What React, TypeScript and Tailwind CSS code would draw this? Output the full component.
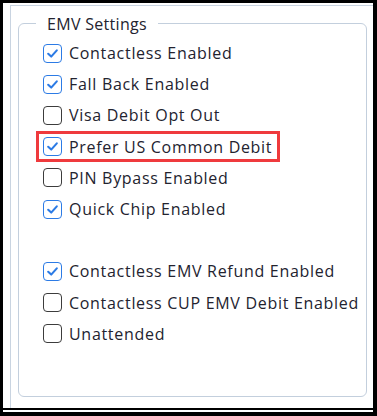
import React from 'react';

type Item = { label: string; checked: boolean; highlight?: boolean } | null;

const items: Item[] = [
  { label: 'Contactless Enabled', checked: true },
  { label: 'Fall Back Enabled', checked: true },
  { label: 'Visa Debit Opt Out', checked: false },
  { label: 'Prefer US Common Debit', checked: true, highlight: true },
  { label: 'PIN Bypass Enabled', checked: false },
  { label: 'Quick Chip Enabled', checked: true },
  null,
  { label: 'Contactless EMV Refund Enabled', checked: true },
  { label: 'Contactless CUP EMV Debit Enabled', checked: false },
  { label: 'Unattended', checked: false },
];

const font = { fontFamily: '"Open Sans", "Noto Sans", sans-serif' };

function CheckBox({ checked }: { checked: boolean }) {
  return (
    <span
      className={
        checked
          ? 'flex h-[19px] w-[19px] shrink-0 items-center justify-center rounded-[4px] border-[1.6px] border-[#2c7be5] bg-white'
          : 'flex h-[19px] w-[19px] shrink-0 items-center justify-center rounded-[4px] border-[1.6px] border-[#3c3c3c] bg-white'
      }
    >
      {checked && (
        <svg width="13" height="13" viewBox="0 0 13 13" fill="none">
          <path d="M2.2 6.8 L5.2 9.6 L10.8 3.4" stroke="#2c7be5" strokeWidth="2.1" strokeLinecap="round" strokeLinejoin="round" />
        </svg>
      )}
    </span>
  );
}

export default function App() {
  return (
    <div className="h-[416px] w-[377px] bg-black pb-[4px] pl-[3px] pr-[4px] pt-[3px]">
      <div className="flex h-full flex-col bg-white">
        <div className="min-h-0 flex-1 pl-[7px] pt-[2px]">
          <div className="h-full border-l border-t border-[#c9d4e1] pl-[7px] pt-[17px]">
            <div className="relative h-[374px] w-[349px] rounded-[6px] border border-[#c3cfdd] pl-[24px] pt-[13.5px]">
              <span
                className="absolute left-[17px] top-0 -translate-y-1/2 bg-white px-[11px] text-[16px] leading-none tracking-[0.3px] text-[#23232f]"
                style={font}
              >
                EMV Settings
              </span>
              <div className="flex flex-col" style={font}>
                {items.map((item, i) =>
                  item === null ? (
                    <div key={i} className="h-[31.2px]" />
                  ) : item.highlight ? (
                    <div key={i} className="flex h-[31.2px]">
                      <div className="-ml-[7px] flex items-center gap-[7px] border-[3px] border-[#ef3a3d] pl-[4px] pr-[5px]">
                        <CheckBox checked={item.checked} />
                        <span className="text-[16px] tracking-[0.7px] text-[#23232f]">{item.label}</span>
                      </div>
                    </div>
                  ) : (
                    <div key={i} className="flex h-[31.2px] items-center gap-[7px]">
                      <CheckBox checked={item.checked} />
                      <span className="text-[16px] tracking-[0.7px] text-[#23232f]">{item.label}</span>
                    </div>
                  )
                )}
              </div>
            </div>
          </div>
        </div>
        <div className="h-[2px] bg-black" />
        <div className="h-[2px] bg-white" />
      </div>
    </div>
  );
}
